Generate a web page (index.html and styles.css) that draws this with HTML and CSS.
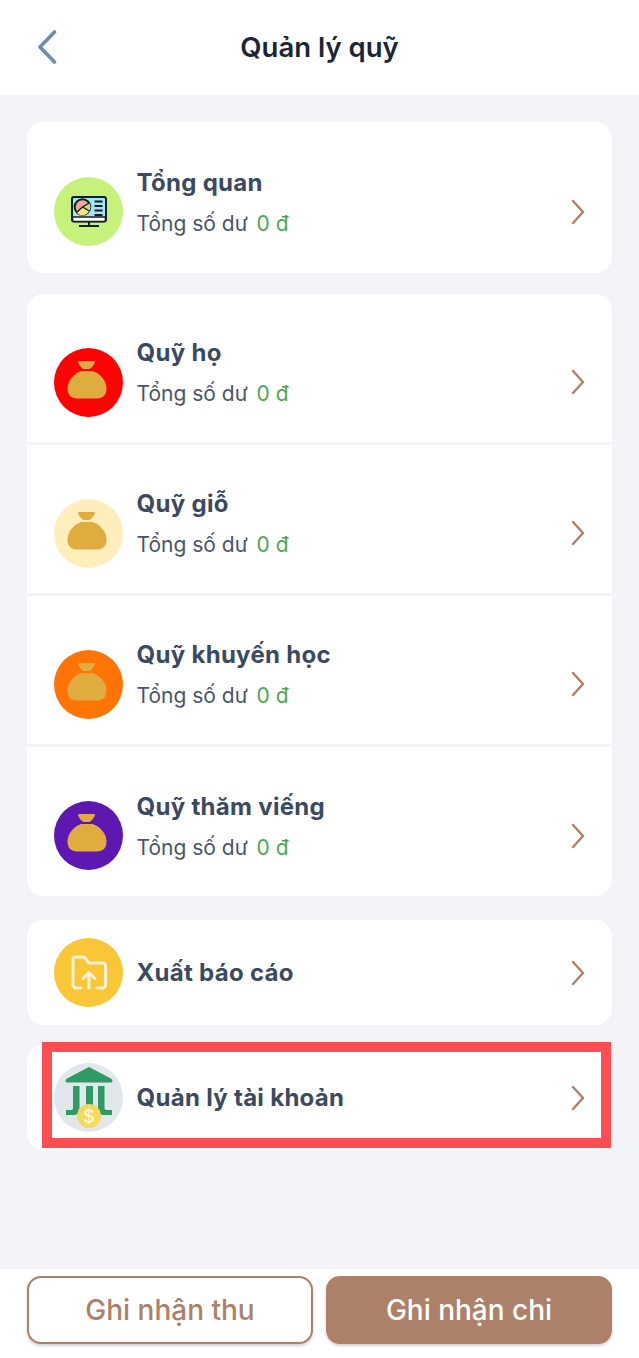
FILE: index.html
```html
<!DOCTYPE html>
<html lang="vi">
<head>
  <meta charset="UTF-8" />
  <meta name="viewport" content="width=device-width, initial-scale=1.0" />
  <title>Quản lý quỹ</title>
  <link rel="stylesheet" href="styles.css">
</head>
<body>
  <svg class="sprite" width="0" height="0">
    <symbol id="bag" viewBox="0 0 40 38">
      <path d="M12.500 0h14.500c.8 0 1.300.8.900 1.500-1 2.500-2.900 5-5.400 6.500h-6c-2.500-1.500-4.400-4-5.400-6.500-.4-.7.200-1.500 1.400-1.500z" fill="#e0ac3f"/>
      <path d="M14 10h11.500C33.500 12.500 39.500 20 39.500 27.500 39.500 34 36 37.500 30 37.500H10C4 37.500 .5 34 .5 27.500.5 20 6.500 12.500 14 10z" fill="#e0ac3f"/>
    </symbol>
    <symbol id="chevron" viewBox="0 0 14 26">
      <path d="M2 2l10 11L2 24" fill="none" stroke="#ad8169" stroke-width="2.400" stroke-linecap="round" stroke-linejoin="round"/>
    </symbol>
  </svg>

  <header class="topbar">
    <svg class="back" viewBox="0 0 20 34"><path d="M17.500 2L3 17 17.500 32" fill="none" stroke="#6e8bb3" stroke-width="3.600" stroke-linecap="round" stroke-linejoin="round"/></svg>
    <h1>Quản lý quỹ</h1>
  </header>

  <main class="content">
    <section class="card">
      <div class="row">
        <div class="circle lime">
          <svg class="ic-monitor" viewBox="0 0 36 31">
            <rect x="1" y="1" width="34" height="24.500" rx="2" fill="#a5e3f7" stroke="#14201f" stroke-width="2"/>
            <path d="M1.500 21h33v3a1.500 1.500 0 0 1-1.500 1.500H3A1.500 1.500 0 0 1 1.500 24z" fill="#fff" stroke="#14201f" stroke-width="1.600"/>
            <circle cx="11.500" cy="11" r="7.800" fill="#f0a79c" stroke="#14201f" stroke-width="2"/>
            <path d="M11.500 11l6.800-4a7.800 7.800 0 0 1 0 8z" fill="#b5e08a"/>
            <path d="M11.500 11l6.800 4a7.800 7.800 0 0 1-12.800 1.500z" fill="#f5e27a"/>
            <path d="M11.500 11l6.800-4M11.500 11l6.800 4M11.500 11l-6 5.500" stroke="#14201f" stroke-width="1.400"/>
            <path d="M23.500 5.500h8M23.500 10h8M23.500 14.500h8M23.500 19h8" stroke="#14201f" stroke-width="1.800"/>
            <path d="M18 25.500v4M8 30h20" stroke="#14201f" stroke-width="2"/>
          </svg>
        </div>
        <div class="info">
          <div class="name">Tổng quan</div>
          <div class="sub">Tổng số dư <span class="money">0 đ</span></div>
        </div>
        <svg class="chevron"><use href="#chevron"/></svg>
      </div>
    </section>

    <section class="card">
      <div class="row">
        <div class="circle red"><svg class="bag"><use href="#bag"/></svg></div>
        <div class="info">
          <div class="name">Quỹ họ</div>
          <div class="sub">Tổng số dư <span class="money">0 đ</span></div>
        </div>
        <svg class="chevron"><use href="#chevron"/></svg>
      </div>
      <div class="row">
        <div class="circle cream"><svg class="bag"><use href="#bag"/></svg></div>
        <div class="info">
          <div class="name">Quỹ giỗ</div>
          <div class="sub">Tổng số dư <span class="money">0 đ</span></div>
        </div>
        <svg class="chevron"><use href="#chevron"/></svg>
      </div>
      <div class="row">
        <div class="circle orange"><svg class="bag"><use href="#bag"/></svg></div>
        <div class="info">
          <div class="name">Quỹ khuyến học</div>
          <div class="sub">Tổng số dư <span class="money">0 đ</span></div>
        </div>
        <svg class="chevron"><use href="#chevron"/></svg>
      </div>
      <div class="row">
        <div class="circle purple"><svg class="bag"><use href="#bag"/></svg></div>
        <div class="info">
          <div class="name">Quỹ thăm viếng</div>
          <div class="sub">Tổng số dư <span class="money">0 đ</span></div>
        </div>
        <svg class="chevron"><use href="#chevron"/></svg>
      </div>
    </section>

    <section class="card export">
      <div class="row-small">
        <div class="circle yellow">
          <svg class="ic-folder" viewBox="0 0 36 35">
            <path d="M10 33H5a3 3 0 0 1-3-3V4.500a2.500 2.500 0 0 1 2.500-2.500h8.500l5 6h13.500a3 3 0 0 1 3 3v19a3 3 0 0 1-3 3H26" fill="none" stroke="#fff3d6" stroke-width="3" stroke-linecap="round" stroke-linejoin="round"/>
            <path d="M18 33V17.500M12 23.500l6-6 6 6" fill="none" stroke="#fff3d6" stroke-width="3" stroke-linecap="round" stroke-linejoin="round"/>
          </svg>
        </div>
        <div class="name">Xuất báo cáo</div>
        <svg class="chevron"><use href="#chevron"/></svg>
      </div>
    </section>

    <section class="card account">
      <div class="row-small">
        <div class="circle grey">
          <svg class="ic-bank" viewBox="-1 0 69 69">
            <path d="M34 4L55 15c2 1.200 2.500 2 2.500 3 0 .8-.6 1.500-1.500 1.500H12c-.9 0-1.500-.7-1.500-1.500 0-1 .5-1.800 2.500-3L31 5.500z" fill="#2f9a63"/>
            <rect x="31" y="23" width="7" height="19" fill="#2f9a63"/>
            <path d="M18 23h6.500v24a5 5 0 0 1-5 5H11v-5h5c1.300 0 2-.7 2-2z" fill="#2f9a63"/>
            <path d="M43 23h6.500v22c0 1.300.7 2 2 2H57v5h-9a5 5 0 0 1-5-5z" fill="#2f9a63"/>
            <circle cx="34" cy="53" r="12" fill="#f6d85c"/>
            <text x="34" y="59.500" class="dollar">$</text>
          </svg>
        </div>
        <div class="name">Quản lý tài khoản</div>
        <svg class="chevron"><use href="#chevron"/></svg>
      </div>
      <div class="highlight"></div>
    </section>
  </main>

  <footer class="actions">
    <button class="btn btn-outline">Ghi nhận thu</button>
    <button class="btn btn-fill">Ghi nhận chi</button>
  </footer>
</body>
</html>
```

FILE: styles.css
```css
* {
  box-sizing: border-box;
  margin: 0;
  padding: 0;
  font-family: 'Inter', 'Noto Sans', sans-serif;
}
html, body {
  height: 100%;
}
body {
  display: flex;
  flex-direction: column;
  background: #f3f4f8;
  color: #3b4a60;
}
.sprite {
  position: absolute;
}
.topbar {
  height: 95px;
  flex: none;
  padding-bottom: 2px;
  display: flex;
  align-items: center;
  justify-content: center;
  background: #fff;
}
.back {
  position: absolute;
  left: 37px;
  top: 30px;
  width: 20px;
  height: 34px;
}
h1 {
  font-size: 27.5px;
  font-weight: 600;
  color: #1c2536;
}
.content {
  flex: 1;
  padding: 27px 27px 0;
}
.card {
  background: #fff;
  border-radius: 17px;
  margin-bottom: 21px;
  overflow: hidden;
}
.row {
  height: 151px;
  padding: 55px 27px 27px;
  display: flex;
  align-items: center;
  border-bottom: 3px solid #f3f4f8;
}
.row:last-child {
  height: 149px;
  border-bottom: none;
}
.card:first-child .row {
  height: 151px;
}
.row-small {
  height: 105px;
  padding: 0 27px;
  display: flex;
  align-items: center;
}
.export {
  margin-top: 24px;
  margin-bottom: 20px;
}
.account {
  position: relative;
  overflow: visible;
}
.highlight {
  position: absolute;
  left: 15px;
  top: -3px;
  right: 1px;
  bottom: 2px;
  border: 10px solid #fe4d53;
}
.circle {
  width: 69px;
  height: 69px;
  flex: none;
  border-radius: 50%;
  display: flex;
  align-items: center;
  justify-content: center;
  margin-right: 14px;
}
.lime { background: #c6f27b; }
.red { background: #fb0404; }
.cream { background: #fdeebc; }
.orange { background: #fe7406; }
.purple { background: #5f17b2; }
.yellow { background: #f8c637; }
.grey { background: #e2e7ec; }
.bag {
  width: 40px;
  height: 38px;
  margin: 0 3px 5px 0;
}
.ic-monitor {
  width: 36px;
  height: 31px;
}
.ic-folder {
  width: 36px;
  height: 35px;
}
.ic-bank {
  width: 69px;
  height: 69px;
}
.dollar {
  font-size: 18px;
  font-weight: 500;
  fill: #fff8d8;
  text-anchor: middle;
}
.info {
  flex: 1;
  margin-left: -0.5px;
  margin-bottom: 20px;
}
.name {
  flex: 1;
  font-size: 24px;
  font-weight: 700;
  letter-spacing: 0.3px;
  color: #3b4a60;
}
.row-small .name {
  margin-left: -0.5px;
}
.sub {
  margin-top: 14px;
  font-size: 21px;
  color: #4a5568;
}
.money {
  margin-left: 3px;
  color: #4ba84f;
}
.chevron {
  width: 14px;
  height: 26px;
  flex: none;
}
.actions {
  height: 89px;
  flex: none;
  background: #fff;
  padding: 7px 27px 0;
  display: flex;
  gap: 13px;
}
.btn {
  flex: 1 1 0;
  height: 68px;
  font-size: 28px;
  font-weight: 500;
  border: 2px solid #ad8169;
  border-radius: 14px;
  box-shadow: 0 2px 3px rgba(0, 0, 0, 0.18);
}
.btn-outline {
  background: #fff;
  color: #ad8169;
}
.btn-fill {
  background: #ad8169;
  color: #fff;
}
```
